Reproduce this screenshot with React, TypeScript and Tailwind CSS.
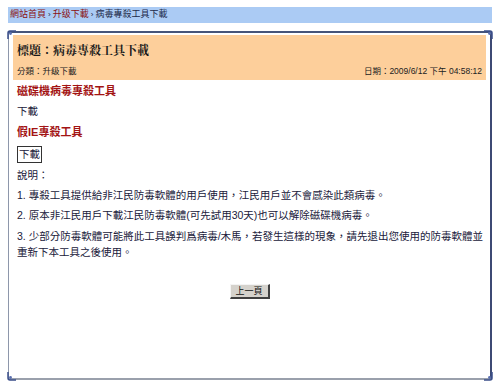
const font = "font-['Liberation_Sans','Noto_Sans_CJK_TC',sans-serif]"

const Corner = ({ className }: { className: string }) => (
    <svg width="10" height="10" viewBox="0 0 10 10" className={`absolute ${className}`}>
        <path d="M1 9 L1 3 Q1 1 3 1 L9 1" fill="none" stroke="#3b4f8a" strokeWidth="1.5" />
        <circle cx="3.5" cy="3.5" r="1.4" fill="#5a6fb0" />
    </svg>
)

export default function App() {
    return (
        <div className={`w-[500px] h-[385px] bg-white overflow-hidden pt-[7px] ${font}`}>
            {/* breadcrumb */}
            <div className="mx-[8px] h-[16px] bg-[#abcbf4] flex items-center gap-[2px] px-[2px] text-[9px] text-[#1c2a4a]">
                <span className="text-[#8a1010]">網站首頁</span>
                <span className="text-[8px]">›</span>
                <span className="text-[#8a1010]">升级下載</span>
                <span className="text-[8px]">›</span>
                <span>病毒專殺工具下載</span>
            </div>

            {/* frame */}
            <div className="relative mx-[8px] mt-[8px] h-[349px] border-t-[2px] border-t-[#46557a] border-l border-l-[#8e97ab] border-r-[2px] border-r-[#3d4a74] border-b-[2px] border-b-[#9aa0ac] p-[4px] pt-[2px]">
                <Corner className="-left-[2px] -top-[3px]" />
                <Corner className="-right-[3px] -top-[3px] scale-x-[-1]" />
                <Corner className="-left-[2px] -bottom-[3px] scale-y-[-1]" />
                <Corner className="-right-[3px] -bottom-[3px] scale-[-1]" />

                <div className="bg-[#fdcf9b] h-[45px] flex flex-col px-[4px]">
                    <div className="h-[27px] flex items-end pb-[2px] text-[12px] font-bold text-[#1a1a1a] font-['Liberation_Serif','Noto_Serif_CJK_TC','Noto_Sans_CJK_TC',serif]">
                        標題：病毒專殺工具下載
                    </div>
                    <div className="flex-1 flex items-center justify-between text-[8.5px] text-[#222]">
                        <span>分類：升级下載</span>
                        <span>日期：2009/6/12 下午 04:58:12</span>
                    </div>
                </div>

                <div className="px-[4px] text-[10.5px] text-[#20203a]">
                    <div className="h-[22px] flex items-center text-[11px] font-bold text-[#a31414]">磁碟機病毒專殺工具</div>
                    <div className="h-[20px] flex items-center">下載</div>
                    <div className="h-[21px] flex items-center text-[11px] font-bold text-[#a31414]">假IE專殺工具</div>
                    <div className="h-[22px] flex items-center">
                        <span className="border border-[#333] px-[1px] leading-[15px]">下載</span>
                    </div>
                    <div className="h-[21px] flex items-center">說明：</div>
                    <div className="h-[20px] flex items-center">1. 專殺工具提供給非江民防毒軟體的用戶使用，江民用戶並不會感染此類病毒。</div>
                    <div className="h-[20px] flex items-center">2. 原本非江民用戶下載江民防毒軟體(可先試用30天)也可以解除磁碟機病毒。</div>
                    <div className="pt-[2px] leading-[16px] whitespace-nowrap">
                        3. 少部分防毒軟體可能將此工具誤判爲病毒/木馬，若發生這樣的現象，請先退出您使用的防毒軟體並<br />
                        重新下本工具之後使用。
                    </div>

                    <div className="flex justify-center mt-[24px]">
                        <button className="w-[40px] h-[15px] bg-[#d5d2cc] border-t border-l border-t-[#f4f4f4] border-l-[#f4f4f4] border-r-[2px] border-b-[2px] border-r-[#404040] border-b-[#404040] text-[9px] text-[#111] leading-none">
                            上一頁
                        </button>
                    </div>
                </div>
            </div>
        </div>
    )
}
